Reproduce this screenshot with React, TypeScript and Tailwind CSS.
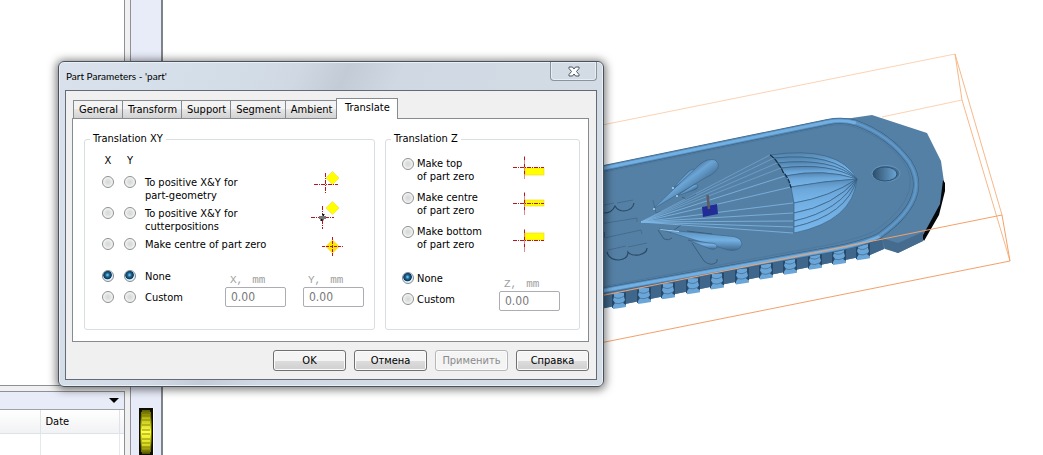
import { ReactNode, useState } from "react";

const tabs = ["General", "Transform", "Support", "Segment", "Ambient", "Translate"];

const radioClass =
  "m-0 size-3 shrink-0 cursor-pointer appearance-none rounded-full border border-[#8e8f8f] bg-[radial-gradient(circle,#d4d6d8_0%,#e2e3e4_40%,#fafafa_75%)] checked:border-[#7d8c96] checked:bg-[radial-gradient(circle_at_45%_40%,#8fd3f2_0%,#1a6596_25%,#0a3656_48%,#e8f0f4_58%)]";

const buttonClass =
  "h-[21px] w-[73px] rounded-[3px] border border-[#707070] bg-linear-to-b from-[#f4f4f4] from-50% via-[#dddddd] via-50% to-[#cfcfcf] text-center leading-4 shadow-[inset_0_0_0_1px_#fbfbfb] disabled:border-[#b4b6b8] disabled:from-[#f4f4f4] disabled:via-[#f4f4f4] disabled:to-[#f4f4f4] disabled:text-[#8b8b8b]";

const red = { stroke: "#b8161c", strokeWidth: 1, strokeDasharray: "4 1 1 1" };

const PositiveIcon = () => (
  <svg viewBox="0 0 40 31" className="h-[31px] w-10 overflow-visible">
    <path d="M21.5-4.5l6.5 6.5-6.5 6.5-6.5-6.5z" fill="#ff0" stroke="#f0dc30" strokeWidth=".6" />
    <path d="M3 8.5h24M14.5-3v21" {...red} />
  </svg>
);

const CutterIcon = () => (
  <svg viewBox="0 0 40 31" className="h-[31px] w-10 overflow-visible">
    <path d="M21.5-5.5l6.5 6.5-6.5 6.5-6.5-6.5z" fill="#ff0" stroke="#f0dc30" strokeWidth=".6" />
    <path d="M0 10.5h23M11.5-1v23" {...red} />
    <path d="M8 9h3V7.500h2V9h2v3h-2v1.500h-3V12H8z" fill="#777" />
    <path d="M11 7.500h2.500M9 13h3M12.500 7v2M10.500 12v2" stroke="#111" />
  </svg>
);

const CentreIcon = () => (
  <svg viewBox="0 0 40 31" className="h-[31px] w-10 overflow-visible">
    <path d="M21.500 2l6.500 6.500-6.500 6.500-6.500-6.500z" fill="#ffeb00" stroke="#f2c800" strokeWidth=".6" />
    <path d="M11 8.500h21M21.500-1v19" {...red} strokeDasharray="3 1" />
  </svg>
);

const ZIcon = ({ line, top, height }: { line: number; top: number; height: number }) => (
  <svg viewBox="0 0 40 34" className="h-[34px] w-10 overflow-visible">
    <rect x="17" y={top} width="19" height={height} fill="#ff0" stroke="#f0d020" strokeWidth=".6" />
    <path d={`M5 ${line}h31M16.500 ${line - 11}v22`} {...red} />
  </svg>
);

const xyOptions: { value: string; lines: string[]; icon: ReactNode }[] = [
  { value: "geometry", lines: ["To positive X&Y for", "part-geometry"], icon: <PositiveIcon /> },
  { value: "cutter", lines: ["To positive X&Y for", "cutterpositions"], icon: <CutterIcon /> },
  { value: "centre", lines: ["Make centre of part zero"], icon: <CentreIcon /> },
];

const zOptions = [
  { value: "top", lines: ["Make top", "of part zero"], line: 10.5, top: 11, height: 7 },
  { value: "centre", lines: ["Make centre", "of part zero"], line: 12.5, top: 9, height: 6 },
  { value: "bottom", lines: ["Make bottom", "of part zero"], line: 15.5, top: 8, height: 7 },
];

const Lines = ({ lines }: { lines: string[] }) => (
  <>
    {lines.map((line) => (
      <span key={line} className="block whitespace-nowrap">
        {line}
      </span>
    ))}
  </>
);

const AxisRadios = ({
  value,
  x,
  y,
  onX,
  onY,
}: {
  value: string;
  x: string;
  y: string;
  onX: (v: string) => void;
  onY: (v: string) => void;
}) => (
  <>
    <input type="radio" name="axis-x" aria-label={`X ${value}`} className={radioClass} checked={x === value} onChange={() => onX(value)} />
    <input type="radio" name="axis-y" aria-label={`Y ${value}`} className={`${radioClass} ml-[10px]`} checked={y === value} onChange={() => onY(value)} />
  </>
);

const Field = ({ axis }: { axis: string }) => (
  <div className="w-[61px]">
    <label htmlFor={`offset-${axis}`} className="flex h-3 gap-[9px] pl-[5px] font-['Liberation_Mono',monospace] text-[11px] leading-[10px] text-[#a0a0a0]">
      <span>{axis},</span>
      <span>mm</span>
    </label>
    <input
      id={`offset-${axis}`}
      disabled
      defaultValue="0.00"
      className="block h-5 w-full rounded-[2px] border border-[#abadb3] bg-white px-[5px] text-[12px] text-[#77787a]"
    />
  </div>
);

const TranslatePage = () => {
  const [x, setX] = useState("none");
  const [y, setY] = useState("none");
  const [z, setZ] = useState("none");

  return (
    <div className="flex gap-[10px] border border-[#868b91] bg-white pt-3 pr-2 pb-[11px] pl-[11px]">
      <fieldset className="h-[199px] flex-1 rounded-[3px] border border-[#d8dfe2]">
        <legend className="ml-[5px] px-[3px] leading-4">Translation XY</legend>
        <div className="flex h-[29px] gap-[10px] pt-[6px] pl-[17px] leading-4">
          <span className="w-3 text-center">X</span>
          <span className="w-3 text-center">Y</span>
        </div>
        {xyOptions.map((option) => (
          <div key={option.value} className="flex h-[31px] items-start pr-[23px] pl-[17px] leading-[13px]">
            <AxisRadios value={option.value} x={x} y={y} onX={setX} onY={setY} />
            <div className="ml-[9px] flex-1">
              <Lines lines={option.lines} />
            </div>
            {option.icon}
          </div>
        ))}
        <div className="mt-px flex pr-[10px] pl-[17px] leading-[14px]">
          <div className="flex-1">
            <div className="flex h-[21px]">
              <AxisRadios value="none" x={x} y={y} onX={setX} onY={setY} />
              <span className="ml-[9px]">None</span>
            </div>
            <div className="flex">
              <AxisRadios value="custom" x={x} y={y} onX={setX} onY={setY} />
              <span className="ml-[9px]">Custom</span>
            </div>
          </div>
          <div className="flex gap-[17px] pt-[5px]">
            <Field axis="X" />
            <Field axis="Y" />
          </div>
        </div>
      </fieldset>

      <fieldset className="h-[199px] w-[195px] rounded-[3px] border border-[#d8dfe2]">
        <legend className="ml-[5px] px-[3px] leading-4">Translation Z</legend>
        <div className="h-[125px] pt-[10px] pr-[31px] pl-4">
          {zOptions.map((option) => (
            <div key={option.value} className="flex h-[34px] items-start leading-[13px]">
              <input
                type="radio"
                id={`z-${option.value}`}
                name="axis-z"
                className={`${radioClass} mt-px`}
                checked={z === option.value}
                onChange={() => setZ(option.value)}
              />
              <label htmlFor={`z-${option.value}`} className="ml-[3px] flex-1">
                <Lines lines={option.lines} />
              </label>
              <ZIcon line={option.line} top={option.top} height={option.height} />
            </div>
          ))}
        </div>
        <div className="flex pr-[19px] pl-4 leading-[14px]">
          <div className="flex-1">
            {["none", "custom"].map((value) => (
              <label key={value} className="flex h-[21px] gap-[3px] capitalize">
                <input type="radio" name="axis-z" className={radioClass} checked={z === value} onChange={() => setZ(value)} />
                {value}
              </label>
            ))}
          </div>
          <div className="pt-[7px]">
            <Field axis="Z" />
          </div>
        </div>
      </fieldset>
    </div>
  );
};

const Dialog = () => (
  <div
    role="dialog"
    aria-labelledby="dialog-title"
    className="absolute top-[61px] left-[58px] w-[546px] rounded-[6px] border border-[#4a525b] bg-[linear-gradient(115deg,#d9e2ec_0%,#d3dde8_25%,#d0d9e3_35%,#c3ccd6_42%,#d0d9e3_50%,#d5dde6_100%)] px-[6px] pb-[6px] shadow-[0_1px_9px_2px_rgba(0,0,0,0.5),inset_0_0_0_1px_#e9f0f6]"
  >
    <div className="flex h-7 items-start justify-between">
      <h1 id="dialog-title" className="pt-[6px] pl-[1px] font-['Lato','Noto_Sans',sans-serif] text-[10px] leading-4 font-normal">
        Part Parameters - &apos;part&apos;
      </h1>
      <button
        type="button"
        aria-label="Close"
        className="flex h-[19px] w-[47px] items-center justify-center rounded-b-[4px] border border-t-0 border-[#8a949e] bg-[#d3dbe4] shadow-[inset_0_0_0_1px_#e6edf3]"
      >
        <svg viewBox="0 0 12 11" className="h-[11px] w-3">
          <path
            d="M1 1h3.500l1.500 2 1.500-2H11v1.500L8.500 5.500 11 8.500V10H7.500L6 8l-1.500 2H1V8.500l2.500-3L1 2.500z"
            fill="#fff"
            stroke="#4b5563"
          />
        </svg>
      </button>
    </div>
    <div className="border border-[#646b74] bg-[#f0f0f0] pr-[7px] pb-2 pl-[6px]">
      <div role="tablist" className="flex h-[27px] items-end pl-[1px]">
        {tabs.map((tab) =>
          tab === "Translate" ? (
            <button key={tab} type="button" role="tab" aria-selected className="relative top-px h-[21px] w-[62px] border border-b-0 border-[#868b91] bg-white pb-px text-center">
              {tab}
            </button>
          ) : (
            <button
              key={tab}
              type="button"
              role="tab"
              aria-selected={false}
              className="h-[18px] border border-r-0 border-b-0 border-[#868b91] bg-linear-to-b from-[#f3f3f3] from-45% via-[#e6e6e6] via-50% to-[#d2d2d2] pt-px pr-1 pl-[5px] text-center"
            >
              {tab}
            </button>
          ),
        )}
      </div>
      <TranslatePage />
      <div className="mt-2 flex justify-end gap-2">
        <button type="button" className={buttonClass}>OK</button>
        <button type="button" className={buttonClass}>Отмена</button>
        <button type="button" disabled className={buttonClass}>Применить</button>
        <button type="button" className={buttonClass}>Справка</button>
      </div>
    </div>
  </div>
);

const balusters = [619, 644, 668, 693, 717, 742, 766, 790, 815, 839, 863];

const cords = [
  [770, 155], [774, 158], [777, 163], [781, 168], [785, 176], [791, 187],
  [793, 203], [793, 213], [793, 221], [793, 227], [793, 233],
];

// seams of the canopy: start point, then the control point of the curve to the tip
const seams = [
  [770, 155, 838, 145], [774, 158, 834, 152], [777, 163, 832, 157], [781, 168, 830, 162],
  [785, 176, 824, 168], [791, 187, 824, 181], [794, 203, 830, 197], [794, 213, 834, 206],
  [794, 221, 840, 211], [794, 227, 847, 215], [794, 233, 853, 221],
];

const rim = "M590 171L828 122q14-3 28 1 33 12 53 39 10 16 6 31-5 21-36 43-16 8-50 14L590 293";

const Scene = () => (
  <svg viewBox="163 0 880 455" preserveAspectRatio="xMinYMin meet" className="block w-full">
    <defs>
      <linearGradient id="gore" x1="0" y1="0" x2=".15" y2="1">
        <stop offset="0" stopColor="#4f7fa8" />
        <stop offset=".45" stopColor="#6ca7da" />
        <stop offset="1" stopColor="#78b7ec" />
      </linearGradient>
      <linearGradient id="coneUp" x1=".35" y1=".35" x2=".65" y2=".65">
        <stop offset="0" stopColor="#40678a" />
        <stop offset=".4" stopColor="#6ba6d7" />
        <stop offset="1" stopColor="#426c91" />
      </linearGradient>
      <linearGradient id="coneDown" x1=".45" y1="0" x2=".4" y2="1">
        <stop offset="0" stopColor="#5588b3" />
        <stop offset=".5" stopColor="#74b1e4" />
        <stop offset="1" stopColor="#3f678a" />
      </linearGradient>
      <linearGradient id="hole">
        <stop offset="0" stopColor="#2f4f6a" />
        <stop offset="1" stopColor="#6ba5d6" />
      </linearGradient>
    </defs>

    <path d="M570 131.500L955 54M882 117l80-17" stroke="#fbd3b4" fill="none" />
    <path d="M955 54l7 46 48 161M955 54l47 161" stroke="#f8b888" fill="none" />

    {/* base plate and its edges */}
    <path d="M590 170L838 120l34-5 55 18 14 28 3 21v10l-7 24-14 25-25 12-12-5-16 7L590 311z" fill="#5580a5" />
    <path d="M943 180l2 3v8l-6 24-15 26-2-4 18-33z" fill="#05080b" />
    <path d="M882 238l16 5 25-11v9l-25 12-13-4z" fill="#456c8e" />
    <path d="M590 298L840 247l42-9 2 11-14 6-280 56z" fill="#3f678b" />
    {balusters.map((x) => {
      const y = 299 - (x - 619) * 0.2;
      return (
        <g key={x} transform={`translate(${x} ${y})`}>
          <path d="M-7-4L7-7V6L-7 9z" fill="#28496a" />
          <path d="M-5-6h10v4l1 3-2 3 3 2v2l-6 1-7 1v-3l2-3-2-3 1-3z" fill="#6ba6d8" />
          <path d="M-5-2q5 3 10-1M-5 4q5 2 10-1" stroke="#41698c" fill="none" strokeWidth=".7" />
        </g>
      );
    })}

    {/* raised rim */}
    <path d={rim} fill="none" stroke="#385d7d" strokeWidth="6" />
    <path d={rim} fill="none" stroke="#5488b4" strokeWidth="5" />
    <path d="M590 171L828 122q14-3 28 1M880 236q-16 8-50 14L590 293" fill="none" stroke="#72b0e4" strokeWidth="3" />
    <path d="M856 123q33 12 53 39 10 16 6 31-5 21-36 43" fill="none" stroke="#6299c8" strokeWidth="2" />
    <path d="M590 175L828 126q12-3 26 1 31 10 50 36 9 13 5 28-5 19-34 40-14 7-47 14L590 289" fill="none" stroke="#4a749a" strokeWidth=".7" />

    <ellipse cx="886" cy="173.500" rx="14" ry="8" fill="#456e93" stroke="#74addb" strokeWidth=".6" />
    <ellipse cx="885" cy="174" rx="12" ry="7" fill="url(#hole)" stroke="#2f506d" />

    {/* lettering relief */}
    <g fill="none" stroke="#416788" strokeWidth=".8">
      <path d="M600 206l14-3M617 203l16-3M600 224l37-6v4M604 238l37-8 1 4M608 250l18-4M628 247l19-4M653 200l3 13 5-2" />
      <path d="M658 230l6 9q5 2 8-1M670 233l11-8M692 243l12 18q7 6 13 1v-3M682 197l4 2 10-5M687 231l25 3" stroke="#34566f" />
    </g>
    <g fill="none" stroke="#2a4a66" strokeWidth="1.200">
      <path d="M604 213q8 0 11-7 3 5 9 5 9-1 10-8M604 232v5M607 252q2 8 12 8 9-1 9-8 3 4 11 3 8-2 8-7" />
    </g>

    {cords.map(([cx, cy], i) => (
      <path key={cy} d={`M641 222L${cx} ${cy}`} stroke="#80b9e7" strokeWidth={i < 4 ? 0.5 : 0.8} />
    ))}

    {/* canopy */}
    {seams.slice(1).map(([x, y, cx, cy], i) => {
      const [px, py, pcx, pcy] = seams[i];
      return (
        <path
          key={y}
          d={`M${px} ${py}Q${pcx} ${pcy} 857 179Q${cx} ${cy} ${x} ${y}z`}
          fill="url(#gore)"
          stroke="#355c7d"
          strokeWidth=".6"
        />
      );
    })}
    <path d="M770 155q5 3 9 10 2 2 4 7 6 6 8 16" fill="none" stroke="#172b3c" strokeWidth="1.200" strokeDasharray="5 1" />

    {/* trailing streamers */}
    <g stroke="#3a5f80" strokeWidth=".6">
      <path d="M673 188l16-17q4-3 6-1 1 3-3 6z" fill="url(#coneUp)" />
      <path d="M677 196l16-11q5-2 5 1 0 3-4 4z" fill="url(#coneUp)" />
      <path d="M653 209l47-45q8-6 15-4 7 5 0 12-3 3-10 6z" fill="url(#coneUp)" />
      <path d="M659 229l69 7q13 0 14 8-2 8-14 6z" fill="url(#coneDown)" />
      <path d="M688 240l22 3q7 0 7 4-2 4-9 1z" fill="url(#coneDown)" />
    </g>
    <g fill="#a9d8fa">
      <circle cx="654" cy="209" r="1" />
      <circle cx="673" cy="188" r="1" />
      <circle cx="677" cy="196" r="1" />
      <path d="M659 229l20 2v1l-18-2z" />
    </g>

    <path d="M702 207l15-3 1 10-15 3z" fill="#222c96" />
    <path d="M707.500 195l1.500 14" stroke="#5c5b66" strokeWidth="2.500" />

    <path d="M590 298L1002 215M590 345l420-84-8-46" stroke="#f3a16a" fill="none" />
  </svg>
);

const App = () => (
  <div className="relative flex min-h-screen overflow-hidden bg-white font-['DejaVu_Sans_Condensed','Noto_Sans',sans-serif] text-[11px] text-black">
    <aside className="flex w-[131px] shrink-0 flex-col border-r border-[#8d9096] bg-[#f0f0f0]">
      <div className="mr-[5px] flex-1 border-r border-[#8d9096] bg-white" />
      <div className="border-t border-[#8d9096] pt-[5px] pr-[5px]">
        <div className="border-t border-r border-[#8d9096] bg-white">
          <div className="flex h-[18px] items-center justify-end border-b border-[#a0a3a8] bg-[#e8ecf9] pr-[5px]">
            <button type="button" aria-label="Show list" className="border-x-[5px] border-t-[5px] border-x-transparent border-t-black" />
          </div>
          <table className="w-full table-fixed border-collapse">
            <thead>
              <tr className="h-[23px] bg-linear-to-b from-white to-[#f1f2f4]">
                <th className="w-10 border-r border-b border-[#dfe3e8]" />
                <th className="border-r border-b border-[#dfe3e8] pt-[2px] pl-[5px] text-left font-normal">Date</th>
                <th className="w-[5px] border-b border-[#dfe3e8]" />
              </tr>
            </thead>
            <tbody>
              <tr className="h-[22px]">
                <td className="border-r border-[#e4e9ee]" />
                <td className="border-r border-[#e4e9ee]" />
                <td />
              </tr>
            </tbody>
          </table>
        </div>
      </div>
    </aside>

    <div className="flex w-8 shrink-0 flex-col items-center justify-end border-r-2 border-[#7f8288] bg-[#e8ecf9]">
      <svg viewBox="0 0 15 47" className="h-[47px] w-[15px]">
        <defs>
          <linearGradient id="wheel" x1="0" y1="0" x2="0" y2="1">
            <stop offset="0" stopColor="#5c5c00" />
            <stop offset=".2" stopColor="#c2c21a" />
            <stop offset=".5" stopColor="#ffff45" />
            <stop offset=".8" stopColor="#dada20" />
            <stop offset="1" stopColor="#4c4c00" />
          </linearGradient>
        </defs>
        <path d="M0 0h14v47H0z" fill="#0c0c00" />
        <path d="M14.500 0v47" stroke="#fff" />
        <path d="M3 2h8q3 21 0 44H3Q0 23 3 2z" fill="url(#wheel)" />
        <path d="M3 5h8M3 8h8M3 12h8M3 17h8M3 22h8M3 26h8M3 31h8M3 35h8M3 39h8M3 43h8" stroke="#757500" strokeWidth=".8" />
        <path d="M2.500 4q-2 19 0 40M11.500 4q2 19 0 40" stroke="#777700" fill="none" />
      </svg>
    </div>

    <main className="min-w-0 flex-1">
      <Scene />
    </main>

    <Dialog />
  </div>
);

export default App;
